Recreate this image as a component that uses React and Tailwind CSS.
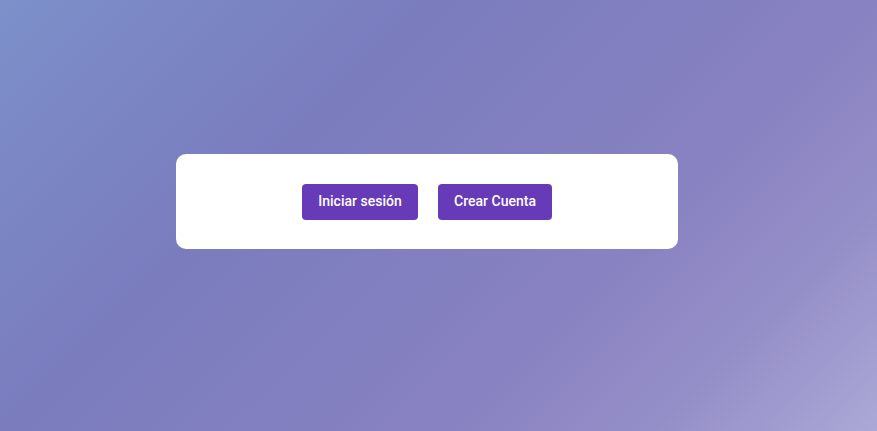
export default function App() {
  return (
    <div
      className="w-full h-[431px] flex items-start justify-start bg-[linear-gradient(135deg,#7c90ca_0%,#7a7cbe_33%,#8380c0_55%,#8982c2_67%,#958fc8_83%,#aba8d6_100%)]"
      style={{ fontFamily: "Roboto, 'Liberation Sans', sans-serif" }}
    >
      <div className="ml-[176px] mt-[154px] w-[502px] h-[95px] bg-white rounded-[10px] flex items-center justify-center gap-[20px]">
        <button className="h-[36px] w-[116px] rounded-[4px] bg-[#673ab7] text-white text-[14px] font-medium">
          Iniciar sesión
        </button>
        <button className="h-[36px] w-[114px] rounded-[4px] bg-[#673ab7] text-white text-[14px] font-medium">
          Crear Cuenta
        </button>
      </div>
    </div>
  );
}
